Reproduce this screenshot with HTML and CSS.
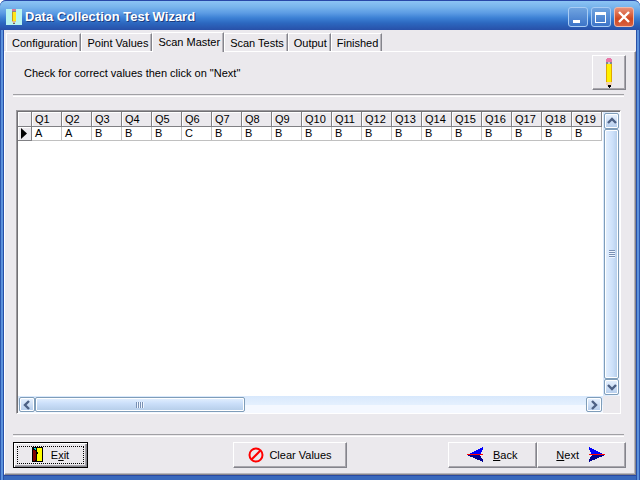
FILE: index.html
```html
<!DOCTYPE html>
<html lang="en">
<head>
  <meta charset="UTF-8">
  <meta name="viewport" content="width=device-width, initial-scale=1.0">
  <title>Data Collection Test Wizard</title>
  <link rel="stylesheet" href="styles.css">
</head>
<body>
  <div class="window">
    <header class="titlebar">
      <svg class="app-icon" width="16" height="16" viewBox="0 0 16 16" shape-rendering="crispEdges">
        <path fill="#b8f4f0" d="M0 0h16v16H0z"/>
        <path fill="#d878a0" d="M6 0h4v2H6z"/>
        <path fill="#888" d="M6 2h4v1H6z"/>
        <path fill="#ffe818" d="M6 3h4v9H6z"/>
        <path fill="#c89820" d="M6 3h1v9H6z"/>
        <path fill="#ddb890" d="M6 12h4v1H9v1H7v-1H6z"/>
        <path fill="#666" d="M7 14h2v1H7z"/>
      </svg>
      <h1>Data Collection Test Wizard</h1>
      <div class="window-buttons">
        <button type="button" aria-label="Minimize"><svg width="18" height="18" viewBox="0 0 18 18"><path fill="#fff" d="M4 12h7v3H4z"/></svg></button>
        <button type="button" aria-label="Maximize"><svg width="18" height="18" viewBox="0 0 18 18"><path fill="#fff" d="M3 4h11v11H3zM4 7v7h9V7z" fill-rule="evenodd"/></svg></button>
        <button type="button" class="close" aria-label="Close"><svg width="18" height="18" viewBox="0 0 18 18"><path stroke="#fff" stroke-width="2.4" d="M4 4l10 10M14 4L4 14"/></svg></button>
      </div>
    </header>

    <main class="client">
      <div class="tabs" role="tablist">
        <button type="button" class="tab" role="tab">Configuration</button>
        <button type="button" class="tab" role="tab">Point Values</button>
        <button type="button" class="tab active" role="tab" aria-selected="true">Scan Master</button>
        <button type="button" class="tab" role="tab">Scan Tests</button>
        <button type="button" class="tab" role="tab">Output</button>
        <button type="button" class="tab" role="tab">Finished</button>
      </div>

      <section class="page">
        <div class="intro">
          <p>Check for correct values then click on "Next"</p>
          <button type="button" class="btn edit" aria-label="Edit">
            <svg width="8" height="31" viewBox="0 0 8 31" shape-rendering="crispEdges">
              <path fill="#e878a8" d="M2 1h4v1h1v3H1V2h1z"/>
              <path fill="#808890" d="M1 5h6v2H1z"/>
              <path fill="#c8ccd0" d="M3 5h2v2H3z"/>
              <path fill="#fff000" d="M1 7h6v18H1z"/>
              <path fill="#e0a800" d="M1 7h1v18H1zM6 7h1v18H6z"/>
              <path fill="#f0d0b0" d="M1 25h6v3H6v1H2v-1H1z"/>
              <path fill="#000" d="M3 28h3v2H5v1H4v-1H3z"/>
            </svg>
          </button>
        </div>
        <hr>

        <!-- Answer grid -->
        <div class="grid-box">
          <div class="grid-view">
            <table>
              <thead>
                <tr><th class="marker"></th><th>Q1</th><th>Q2</th><th>Q3</th><th>Q4</th><th>Q5</th><th>Q6</th><th>Q7</th><th>Q8</th><th>Q9</th><th>Q10</th><th>Q11</th><th>Q12</th><th>Q13</th><th>Q14</th><th>Q15</th><th>Q16</th><th>Q17</th><th>Q18</th><th>Q19</th></tr>
              </thead>
              <tbody>
                <tr><th class="marker"><svg width="6" height="11" viewBox="0 0 6 11"><path d="M0 0l6 5.500L0 11z"/></svg></th><td>A</td><td>A</td><td>B</td><td>B</td><td>B</td><td>C</td><td>B</td><td>B</td><td>B</td><td>B</td><td>B</td><td>B</td><td>B</td><td>B</td><td>B</td><td>B</td><td>B</td><td>B</td><td>B</td></tr>
              </tbody>
            </table>
          </div>
          <div class="scroll vertical">
            <button type="button" class="arrow" aria-label="Scroll up"><svg width="10" height="8" viewBox="0 0 10 8"><path d="M1 6l4-4 4 4"/></svg></button>
            <div class="thumb"><i></i></div>
            <button type="button" class="arrow" aria-label="Scroll down"><svg width="10" height="8" viewBox="0 0 10 8"><path d="M1 2l4 4 4-4"/></svg></button>
          </div>
          <div class="scroll horizontal">
            <button type="button" class="arrow" aria-label="Scroll left"><svg width="8" height="10" viewBox="0 0 8 10"><path d="M6 1L2 5l4 4"/></svg></button>
            <div class="thumb"><i></i></div>
            <button type="button" class="arrow" aria-label="Scroll right"><svg width="8" height="10" viewBox="0 0 8 10"><path d="M2 1l4 4-4 4"/></svg></button>
          </div>
        </div>

        <hr>
        <div class="actions">
          <button type="button" class="btn exit">
            <svg width="11" height="16" viewBox="0 0 11 16" shape-rendering="crispEdges">
              <path d="M0 0h11v15H0z"/>
              <path fill="#ff0" d="M5 1h5v13H5z"/>
              <path fill="#800000" d="M1 3h2v1h1v9H3v1H1z"/>
              <path fill="#00e0e0" d="M2 1h2v2H3V2H2z"/>
              <path d="M5 5h1v2H5z"/>
            </svg>
            <span>E<u>x</u>it</span>
          </button>
          <button type="button" class="btn clear">
            <svg width="16" height="16" viewBox="0 0 16 16"><circle cx="8" cy="8" r="6.500"/><path d="M3.500 12.500l9-9"/></svg>
            <span>Clear Values</span>
          </button>
          <div class="nav">
            <button type="button" class="btn back">
              <svg width="16" height="16" viewBox="0 0 16 16" shape-rendering="crispEdges"><path fill="#00f" d="M0 8L16 0v2l-3 6z"/><path fill="#000090" d="M0 8l16 7v-2l-3-5z"/><path fill="#f00" d="M0 7h16v1H0z"/></svg>
              <span><u>B</u>ack</span>
            </button>
            <button type="button" class="btn next">
              <span><u>N</u>ext</span>
              <svg width="16" height="16" viewBox="0 0 16 16" shape-rendering="crispEdges"><path fill="#00f" d="M16 8L0 0v2l3 6z"/><path fill="#000090" d="M16 8L0 15v-2l3-5z"/><path fill="#f00" d="M0 7h16v1H0z"/></svg>
            </button>
          </div>
        </div>
      </section>
    </main>
  </div>
</body>
</html>
```

FILE: styles.css
```css
* { box-sizing: border-box; }
body { margin: 0; background: #fff; color: #000; font: 11px/14px "Liberation Sans", Arial, sans-serif; }
button { font: inherit; color: inherit; padding: 0; margin: 0; }
svg { display: block; flex: none; }

.window { display: flex; flex-direction: column; min-height: 100vh; padding: 0 4px 4px; border-radius: 6px 6px 0 0; background: linear-gradient(90deg, #2c58b0 0 1px, #5c92dc 1px 3px, #2850a8 3px 4px, #3868bc 4px calc(100% - 4px), #2850a8 calc(100% - 4px) calc(100% - 3px), #5c92dc calc(100% - 3px) calc(100% - 1px), #2c58b0 calc(100% - 1px)); }

.titlebar { display: flex; align-items: center; height: 30px; margin: 0 -4px; padding: 2px 6px 0; border-top: 1px solid #2848a8; border-radius: 6px 6px 0 0; background: linear-gradient(#8cc4f4 0, #78b4ec 6px, #5c9ce4 12px, #3c80d4 17px, #2c68c0 22px, #2850a8 29px); }
.titlebar h1 { flex: 1; margin: 0 0 0 3px; font: bold 13px/18px "Liberation Sans", Arial, sans-serif; color: #fff; text-shadow: 1px 1px #1c3c80; }
.window-buttons { display: flex; gap: 3px; }
.window-buttons button { width: 20px; height: 20px; border: 1px solid #a8ccf4; border-radius: 3px; background: linear-gradient(#70a4e0, #3c74c8); }
.window-buttons .close { border-color: #f0b8a8; background: linear-gradient(#e89078, #d04820 60%, #d86040); }

.client { flex: 1; display: flex; flex-direction: column; background: #ebe9ed; padding-top: 1px; border-bottom: 1px solid #2848a0; }

/* Tabs */
.tabs { display: flex; align-items: flex-end; height: 20px; padding-left: 2px; }
.tab { height: 18px; padding: 0 3px 0 5px; border: 1px solid; border-color: #fff #84848c transparent #fff; border-bottom: 0; background: #ebe9ed; box-shadow: inset -1px 0 #b8b6bc; white-space: nowrap; }
.tab.active { height: 20px; margin-bottom: -1px; padding-bottom: 2px; z-index: 1; }

.page { flex: 1; display: flex; flex-direction: column; padding: 3px 9px 6px 8px; border: 1px solid; border-color: #fff #84848c #84848c #fff; box-shadow: inset -1px -1px #b8b6bc; }
.intro { display: flex; align-items: center; justify-content: space-between; padding-left: 11px; }
.intro p { margin: 0; }
hr { height: 3px; margin: 4px 2px 0 0; border: 0; border-top: 1px solid #a0a0a4; border-bottom: 1px solid #fff; }

.btn { display: flex; align-items: center; justify-content: center; gap: 8px; height: 26px; border: 1px solid; border-color: #fff #84848c #84848c #fff; background: #ebe9ed; box-shadow: inset -1px -1px #a8a6ac; }
.btn.edit { width: 34px; height: 35px; }

/* Answer grid */
.grid-box { flex: 1; display: grid; grid-template-columns: 1fr 17px; grid-template-rows: 1fr 17px; margin: 13px 5px 16px 3px; border: 1px solid; border-color: #9c9a9e #fff #fff #9c9a9e; box-shadow: inset 1px 1px #717074; padding: 1px 0 0 1px; }
.grid-view { min-width: 0; overflow: hidden; background: #fff; }
table { border-collapse: separate; border-spacing: 0; table-layout: fixed; width: 584px; }
th, td { width: 30px; height: 15px; padding: 0 0 0 3px; border-right: 1px solid #c0c0c0; border-bottom: 1px solid #c0c0c0; font-weight: normal; line-height: 14px; text-align: left; }
th { background: #ebe9ed; border-color: #808084; box-shadow: inset 1px 1px #fff; }
tbody th, tbody td { height: 14px; line-height: 13px; }
.marker { width: 14px; }

.scroll { display: flex; padding: 1px; }
.vertical { flex-direction: column; background: linear-gradient(90deg, #d8e8fc, #f4f8ff); }
.horizontal { background: linear-gradient(#d8e8fc, #e4f0fe 50%, #f4f8ff 50%); }
.arrow, .thumb { display: flex; align-items: center; justify-content: center; border: 1px solid #7f9db9; border-radius: 2px; box-shadow: inset 0 0 0 1px #fff; }
.arrow { flex: none; width: 16px; height: 16px; background: linear-gradient(#e8f2ff, #b4ccec); }
.arrow svg { fill: none; stroke: #4d6185; stroke-width: 2.4; }
.vertical .arrow { width: 15px; }
.horizontal .arrow { height: 15px; }
.vertical .thumb { flex: 1; background: linear-gradient(90deg, #e4f0ff, #cce0fa 60%, #b4cce8); }
.horizontal .thumb { width: 36%; margin-right: auto; background: linear-gradient(#e4f0ff, #cce0fa 40%, #b4cce8); }
.vertical i { width: 6px; height: 8px; background: repeating-linear-gradient(#7890b4 0 1px, #eef5ff 1px 2px); }
.horizontal i { width: 8px; height: 6px; background: repeating-linear-gradient(90deg, #7890b4 0 1px, #eef5ff 1px 2px); }

/* Bottom buttons */
.actions { display: grid; grid-template-columns: 220px auto 1fr; padding-top: 5px; }
.exit { position: relative; width: 75px; border: 1px solid #000; box-shadow: inset 1px 1px #fff, inset -1px -1px #84848c, inset -2px -2px #a8a6ac; }
.exit::after { content: ""; position: absolute; inset: 3px; border: 1px dotted #000; }
.clear { width: 114px; gap: 5px; }
.clear svg { fill: none; stroke: #f00; stroke-width: 2; }
.nav { display: flex; justify-content: flex-end; }
.nav .btn { width: 89px; gap: 10px; }
.nav .back { justify-content: flex-start; padding-left: 18px; }
.nav .next { justify-content: flex-end; padding-right: 20px; }
```
